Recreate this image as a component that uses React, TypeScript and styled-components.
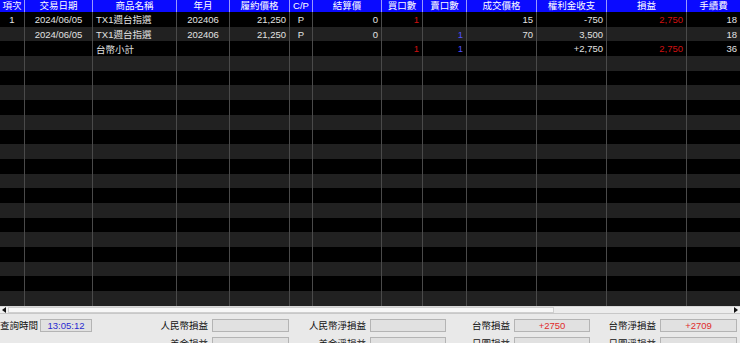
import React from 'react';
import styled, { createGlobalStyle } from 'styled-components';

const GlobalStyle = createGlobalStyle`
  html, body {
    margin: 0;
    padding: 0;
    background: #e9e9e9;
    overflow: hidden;
  }
`;

const COLS = '25px 68px 84px 53px 60px 23px 69px 41px 44px 70px 70px 80px 53px';
const FONT = '"Liberation Sans", "Noto Sans CJK TC", Arial, sans-serif';

const Screen = styled.div`
  width: 740px;
  height: 343px;
  display: flex;
  flex-direction: column;
  overflow: hidden;
  font-family: ${FONT};
  font-size: 9.5px;
`;

const Table = styled.div`
  background: #000;
  display: flex;
  flex-direction: column;
`;

const HeaderRow = styled.div`
  display: grid;
  grid-template-columns: ${COLS};
  height: 12px;
  background: #0a0aff;
  color: #fff;
`;

const HeadCell = styled.div`
  display: flex;
  align-items: center;
  justify-content: center;
  border-right: 1px solid #9a9aff;
  line-height: 12px;
  white-space: nowrap;
  overflow: hidden;
  &:last-child {
    border-right: none;
  }
`;

const Row = styled.div<{ $odd: boolean }>`
  display: grid;
  grid-template-columns: ${COLS};
  height: 14.7px;
  background: ${(p) => (p.$odd ? '#212121' : '#000')};
  color: #e2e2e2;
`;

const Cell = styled.div<{ $align?: 'left' | 'right' | 'center'; $color?: string }>`
  display: flex;
  align-items: center;
  justify-content: ${(p) =>
    p.$align === 'right' ? 'flex-end' : p.$align === 'left' ? 'flex-start' : 'center'};
  padding: 0 3px;
  border-right: 1px solid #4a4a4a;
  color: ${(p) => p.$color || 'inherit'};
  white-space: nowrap;
  overflow: hidden;
  &:last-child {
    border-right: none;
  }
`;

const ScrollBar = styled.div`
  height: 11px;
  display: flex;
  background: #f0f0f0;
  border-top: 1px solid #d8d8d8;
  border-bottom: 1px solid #c8c8c8;
  box-sizing: border-box;
`;

const Arrow = styled.div`
  width: 8px;
  display: flex;
  align-items: center;
  justify-content: center;
`;

const Thumb = styled.div`
  width: 546px;
  background: #f7f7f7;
  border: 1px solid #cfcfcf;
  box-sizing: border-box;
`;

const Track = styled.div`
  flex: 1;
  background: #ececec;
`;

const Panel = styled.div`
  flex: 1;
  display: grid;
  grid-template-columns: 40px 52px 120px 77px 81px 76px 68px 76px 70px 77px;
  grid-auto-rows: 13px;
  row-gap: 5px;
  padding-top: 5px;
  background: #e9e9e9;
  color: #111;
`;

const Label = styled.div<{ $first?: boolean }>`
  display: flex;
  align-items: center;
  justify-content: ${(p) => (p.$first ? 'flex-start' : 'flex-end')};
  padding-right: 4px;
  font-size: 9.5px;
  white-space: nowrap;
`;

const ValueBox = styled.div<{ $color?: string }>`
  display: flex;
  align-items: center;
  justify-content: center;
  background: #e1e1e1;
  border: 1px solid #b4b4b4;
  box-sizing: border-box;
  color: ${(p) => p.$color || '#111'};
  font-size: 9.5px;
`;

type Align = 'left' | 'right' | 'center';
const aligns: Align[] = [
  'center', 'center', 'left', 'center', 'right', 'center', 'right',
  'right', 'right', 'right', 'right', 'right', 'right',
];

const headers = [
  '項次', '交易日期', '商品名稱', '年月', '履約價格', 'C/P', '結算價',
  '買口數', '賣口數', '成交價格', '權利金收支', '損益', '手續費',
];

const RED = '#d01010';
const BLUE = '#5050ff';

type CellData = { text: string; color?: string };

const rows: CellData[][] = [
  [
    { text: '1' }, { text: '2024/06/05' }, { text: 'TX1週台指選' }, { text: '202406' },
    { text: '21,250' }, { text: 'P' }, { text: '0' }, { text: '1', color: RED }, { text: '' },
    { text: '15' }, { text: '-750' }, { text: '2,750', color: RED }, { text: '18' },
  ],
  [
    { text: '' }, { text: '2024/06/05' }, { text: 'TX1週台指選' }, { text: '202406' },
    { text: '21,250' }, { text: 'P' }, { text: '0' }, { text: '' }, { text: '1', color: BLUE },
    { text: '70' }, { text: '3,500' }, { text: '' }, { text: '18' },
  ],
  [
    { text: '' }, { text: '' }, { text: '台幣小計' }, { text: '' },
    { text: '' }, { text: '' }, { text: '' }, { text: '1', color: RED }, { text: '1', color: BLUE },
    { text: '' }, { text: '+2,750' }, { text: '2,750', color: RED }, { text: '36' },
  ],
];

const TOTAL_ROWS = 20;

const summary = [
  [
    { label: '查詢時間', value: '13:05:12', color: '#2a2ad0' },
    { label: '人民幣損益', value: '' },
    { label: '人民幣淨損益', value: '' },
    { label: '台幣損益', value: '+2750', color: '#e02a2a' },
    { label: '台幣淨損益', value: '+2709', color: '#e02a2a' },
  ],
  [
    { label: '', value: null },
    { label: '美金損益', value: '' },
    { label: '美金淨損益', value: '' },
    { label: '日圓損益', value: '' },
    { label: '日圓淨損益', value: '' },
  ],
];

export default function App() {
  const bodyRows: CellData[][] = [];
  for (let i = 0; i < TOTAL_ROWS; i++) {
    bodyRows.push(rows[i] || headers.map(() => ({ text: '' })));
  }

  return (
    <Screen>
      <GlobalStyle />
      <Table>
        <HeaderRow>
          {headers.map((h) => (
            <HeadCell key={h}>{h}</HeadCell>
          ))}
        </HeaderRow>
        {bodyRows.map((r, i) => (
          <Row key={i} $odd={i % 2 === 1}>
            {r.map((c, j) => (
              <Cell key={j} $align={aligns[j]} $color={c.color}>
                {c.text}
              </Cell>
            ))}
          </Row>
        ))}
      </Table>
      <ScrollBar>
        <Arrow>
          <svg width="4" height="6" viewBox="0 0 4 6">
            <path d="M4 0 L0 3 L4 6 Z" fill="#111" />
          </svg>
        </Arrow>
        <Thumb />
        <Track />
        <Arrow>
          <svg width="4" height="6" viewBox="0 0 4 6">
            <path d="M0 0 L4 3 L0 6 Z" fill="#111" />
          </svg>
        </Arrow>
      </ScrollBar>
      <Panel>
        {summary.map((line, li) =>
          line.map((item, k) => (
            <React.Fragment key={`${li}-${k}`}>
              <Label $first={k === 0}>{item.label}</Label>
              {item.value === null ? <div /> : <ValueBox $color={item.color}>{item.value}</ValueBox>}
            </React.Fragment>
          ))
        )}
      </Panel>
    </Screen>
  );
}
